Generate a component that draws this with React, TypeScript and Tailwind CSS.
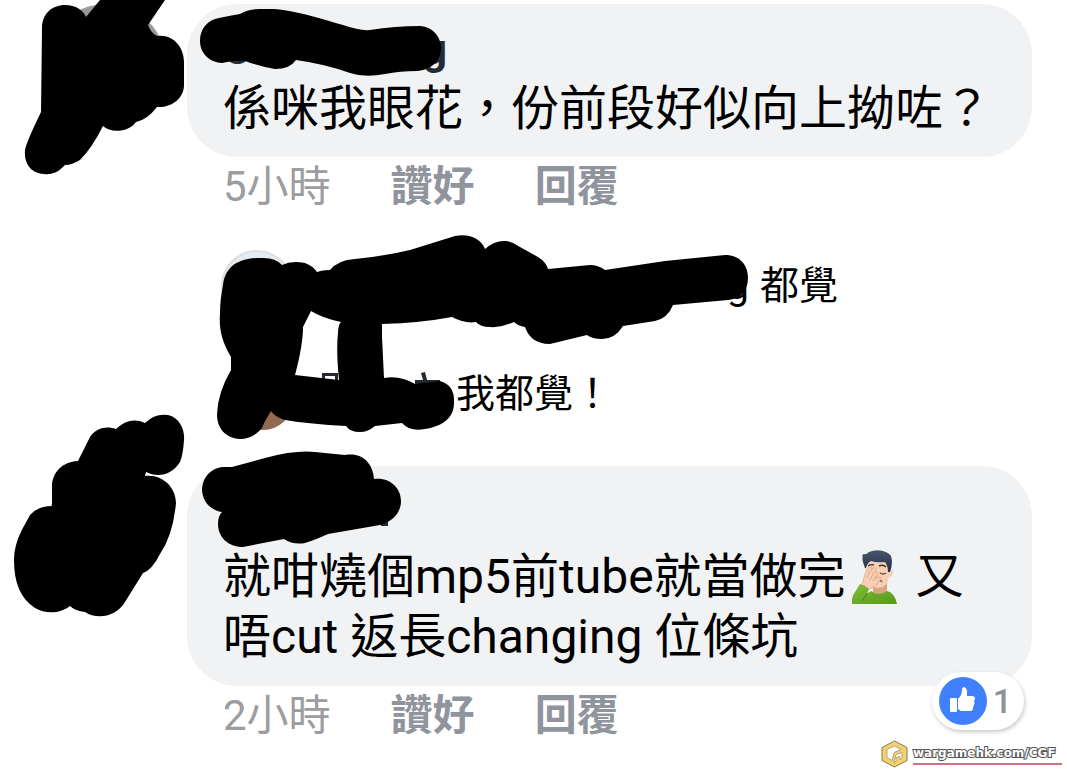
import type { ReactNode } from 'react';

const FONT = 'font-[Roboto,"Noto_Sans_CJK_TC",sans-serif]';

// Pen strokes that hide names and avatars
const MARKS = {
  firstAvatar:
    'M42 28C42 14 52 5 65 5C76 5 83 10 86 17L100 0L165 0L148 25Q151 33 157 36C174 34 184 48 184 62L184 85C184 98 172 108 157 107Q147 120 136 122C128 133 110 133 103 126Q92 148 80 160Q72 165 65 165C58 173 50 175 44 174C30 173 24 163 25 150Q26 143 41 112Z',
  firstName:
    'M200 41C200 28 208 20 219 18Q228 16 240 14Q248 9 260 9L273 9C295 10 325 20 343 25Q360 31 370 30Q395 26 420 26C433 27 441 37 441 48C441 62 430 70 417 71Q400 71 385 74Q365 78 350 73Q325 64 296 60Q290 69 275 69Q262 67 245 61Q235 60 222 63C208 62 200 52 200 41Z',
  replies:
    'M223 285C225 270 234 258 260 258Q275 257 282 265Q292 260 305 263Q313 266 317 272Q322 270 330 270Q338 260 355 259Q385 256 410 250L455 236C470 233 482 240 485 249Q495 240 506 241Q513 242 520 247L538 257Q546 262 548 269L590 265Q598 265 605 270L665 261L725 255C740 255 748 265 748 278C748 290 741 299 728 300L673 305Q668 318 655 321L623 326Q615 339 602 339Q592 339 587 335L550 344C535 344 528 336 525 327Q518 326 514 322Q500 328 490 327Q480 327 476 322Q465 324 452 317Q420 323 382 324L382 337L384 378Q400 375 415 384L440 381Q455 385 454 403C454 418 443 426 425 429Q410 432 402 423L375 426Q368 432 360 432Q350 432 346 426Q310 424 285 420Q275 417 271 411Q263 424 262 428C255 436 248 439 240 439C225 438 217 428 217 414Q218 392 231 370L231 357C221 340 219 328 220 313Q220 300 223 285ZM311 311L303 327Q303 345 295 375L339 380Q336 350 338 333Q338 325 341 322Q322 318 311 311Z',
  secondAvatar:
    'M14 560C14 540 25 525 30 515Q38 506 52 506L52 485C53 472 62 462 78 461L90 437C97 427 107 426 116 429Q130 416 145 423Q155 413 168 415C180 418 185 430 184 440Q183 455 180 462C172 475 158 478 146 472L145 476C163 474 176 488 176 503Q173 535 160 554Q152 570 143 573L125 602C116 617 97 620 85 612Q75 611 70 606C60 614 45 614 35 608C20 598 14 582 14 560Z',
  secondName:
    'M202 489C203 477 210 469 222 467L232 467L265 458Q295 450 315 452L345 455C362 452 373 463 374 479C390 477 401 488 401 501C401 513 392 522 380 525L328 534Q315 540 305 543Q293 545 284 539L243 547C228 547 218 537 218 524Q218 516 222 512C209 510 202 500 202 489Z',
};

function Scribble({ top, children }: { top: number; children: ReactNode }) {
  return (
    <svg
      aria-hidden="true"
      className="absolute left-0 top-0 w-[760px] h-[230px] overflow-visible pointer-events-none"
      viewBox={`0 ${top} 760 230`}
      fillRule="evenodd"
    >
      {children}
    </svg>
  );
}

function FacepalmEmoji() {
  return (
    <svg
      role="img"
      aria-label="facepalm"
      className="inline-block w-[46px] h-[56px] ml-[6px] mr-[6px] align-[-12px]"
      viewBox="0 0 46 56"
    >
      <defs>
        <linearGradient id="shirt" x1="0" y1="0" x2="1" y2="1">
          <stop offset="0" stopColor="#7fbd35" />
          <stop offset="1" stopColor="#559a1d" />
        </linearGradient>
        <linearGradient id="hair" x1="0" y1="0" x2="0" y2="1">
          <stop offset="0" stopColor="#46566f" />
          <stop offset="1" stopColor="#222f45" />
        </linearGradient>
      </defs>
      <path d="M21 34h14v9q-7 5-14 0z" fill="#dba583" />
      <path d="M13 16q0-9 13-10 12 1 12 11v4q4-1 3 3-1 4-4 4-2 11-11 11-12-1-13-23z" fill="#f6d0b4" />
      <path d="M13 19Q9 9 11 5q3 1 6-2 7-3 14-1 9 2 9 10 0 6-2 11h-2q0-6-3-10-8 1-14-1-4 2-5 7z" fill="url(#hair)" />
      <path d="M16 17q3-2 6-1M27 17q4-2 7 1" stroke="#3c3433" strokeWidth="1.4" fill="none" />
      <path d="M28 24q3 2 6 0" stroke="#69473c" strokeWidth="1.3" fill="none" />
      <path d="M25 32q3-2 5 1" stroke="#a7503e" strokeWidth="1.4" fill="none" />
      <path d="M10 36l3-11q1-3 3-4l2-3q2-1 2 1l-1 3 2-3q2-1 3 1l-1 4 2-1q2 1 0 3l-1 4 3-2q3 0 1 3l-4 5q-3 3-7 4l-3 5-8-4z" fill="#f9cdb2" stroke="#dda486" strokeWidth=".7" />
      <path d="M18 22l-3 7M22 23l-4 8M24 27l-3 5" stroke="#d99d7e" strokeWidth=".8" />
      <path d="M0 55q-1-7 3-12l5-8q5 1 9 5-1 3-3 5l5-3q8 6 16 0 8 2 10 13z" fill="url(#shirt)" />
      <path d="M15 44q-2 5-5 8" stroke="#477f20" strokeWidth="1" fill="none" />
    </svg>
  );
}

function Meta({ time }: { time: string }) {
  return (
    <div className="flex gap-[60px] pl-9 text-[42px] leading-[60px] text-[#9b9da0]">
      <span>{time}</span>
      <button className="font-bold text-[#90959d]">讚好</button>
      <button className="font-bold text-[#90959d]">回覆</button>
    </div>
  );
}

function Likes() {
  return (
    <button
      aria-label="1 like"
      className="absolute right-2 bottom-4 flex items-center gap-[6px] h-[58px] pl-[7px] pr-3 rounded-full bg-white shadow-[1px_2px_4px_rgba(0,0,0,0.22)] text-[34px] font-medium text-[#8c929a]"
    >
      <svg className="w-12 h-12" viewBox="0 0 48 48" aria-hidden="true">
        <circle cx="24" cy="24" r="24" fill="#4080ff" />
        <rect x="11" y="21" width="7" height="14" rx="1" fill="#fff" />
        <path d="M19 22q4-4 4-9 0-3 2-3 4 1 3 9h5q3 0 3 3 0 1-1 2 1 2 0 4-1 2-1 3 0 3-3 3H22l-3-2z" fill="#fff" />
      </svg>
      <span>1</span>
    </button>
  );
}

function Watermark() {
  return (
    <a href="#" className="absolute right-[5px] bottom-[6px] flex items-center gap-[5px]">
      <svg className="w-[27px] h-7" viewBox="0 0 27 28" aria-hidden="true">
        <path d="M13.5 1L26 7.500v13L13.500 27 1 20.500v-13z" fill="#f0d173" stroke="#8d7a48" />
        <path d="M13.500 6L20 9.500l-7 3-2 8-5-3v-8z" fill="#fff" stroke="#a08c55" strokeWidth=".7" />
        <path d="M15 14.500l6-2v6l-2 1v-3l-4 1v4l-2 1z" fill="#fff" stroke="#a08c55" strokeWidth=".7" />
      </svg>
      <span className='w-[149px] border-b-2 border-[#d66f7d] font-["DejaVu_Sans",sans-serif] text-[12px] leading-5 font-bold whitespace-nowrap text-white [-webkit-text-stroke:2px_#555] [paint-order:stroke_fill]'>
        wargamehk.com/CGF
      </span>
    </a>
  );
}

export default function App() {
  return (
    <main lang="zh-Hant-HK" className={`relative min-h-screen overflow-hidden bg-white pt-1 text-black ${FONT}`}>
      <article className="relative flex pr-[35px]">
        <div className="w-[187px] shrink-0 pl-[46px]">
          <div className="size-[120px] rounded-full bg-[#999]" />
        </div>
        <div className="flex-1">
          <div className="rounded-[50px] bg-[#f1f2f4] px-9 pt-[22px] pb-[18px]">
            <div className="flex w-[224px] justify-between pb-[5px] text-[42px] leading-12 font-bold text-[#252a34]">
              <span>C</span>
              <span>n</span>
              <span>g</span>
            </div>
            <p className="text-[48px] leading-[60px] whitespace-nowrap">係咪我眼花，份前段好似向上拗咗？</p>
          </div>
          <Meta time="5小時" />
        </div>
        <Scribble top={4}>
          <path d={MARKS.firstAvatar} />
          <path d={MARKS.firstName} />
        </Scribble>
      </article>

      <section className="relative flex flex-col gap-9 pt-[33px] pb-9 pl-[221px] text-[39px] leading-[72px]">
        <div className="flex">
          <div className="size-[72px] rounded-full border-2 border-[#dedfe0] bg-[#e6ebef]" />
          <span className="w-[456px] text-right">g</span>
          <p className="ml-[11px]">都覺</p>
        </div>
        <div className="flex items-end">
          <div className="ml-3 size-[60px] rounded-full bg-[#936951]" />
          <p className="ml-[163px]">我都覺！</p>
        </div>
        <Scribble top={217}>
          <path d="M322 373h16v9h-3v-6h-10v6h-3zM421 373l4-1 2 8h13v4h-25v-4h8z" fill="#25282e" />
          <path d={MARKS.replies} />
        </Scribble>
      </section>

      <article className="relative flex pr-[35px]">
        <div className="w-[187px] shrink-0 pl-12">
          <div className="size-[116px] rounded-full bg-[#aaa8b1]" />
        </div>
        <div className="relative flex-1">
          <div className="rounded-[50px] bg-[#f1f2f4] px-9 pt-[81px] pb-[19px]">
            <p className="text-[48px] leading-[60px] whitespace-nowrap">
              就咁燒個mp5前tube就當做完
              <FacepalmEmoji /> 又
              <br />
              唔cut 返長changing 位條坑
            </p>
          </div>
          <Meta time="2小時" />
          <Likes />
        </div>
        <Scribble top={466}>
          <path d="M381 520h7v6h-7z" fill="#25282e" />
          <path d={MARKS.secondAvatar} />
          <path d={MARKS.secondName} />
        </Scribble>
      </article>

      <Watermark />
    </main>
  );
}
